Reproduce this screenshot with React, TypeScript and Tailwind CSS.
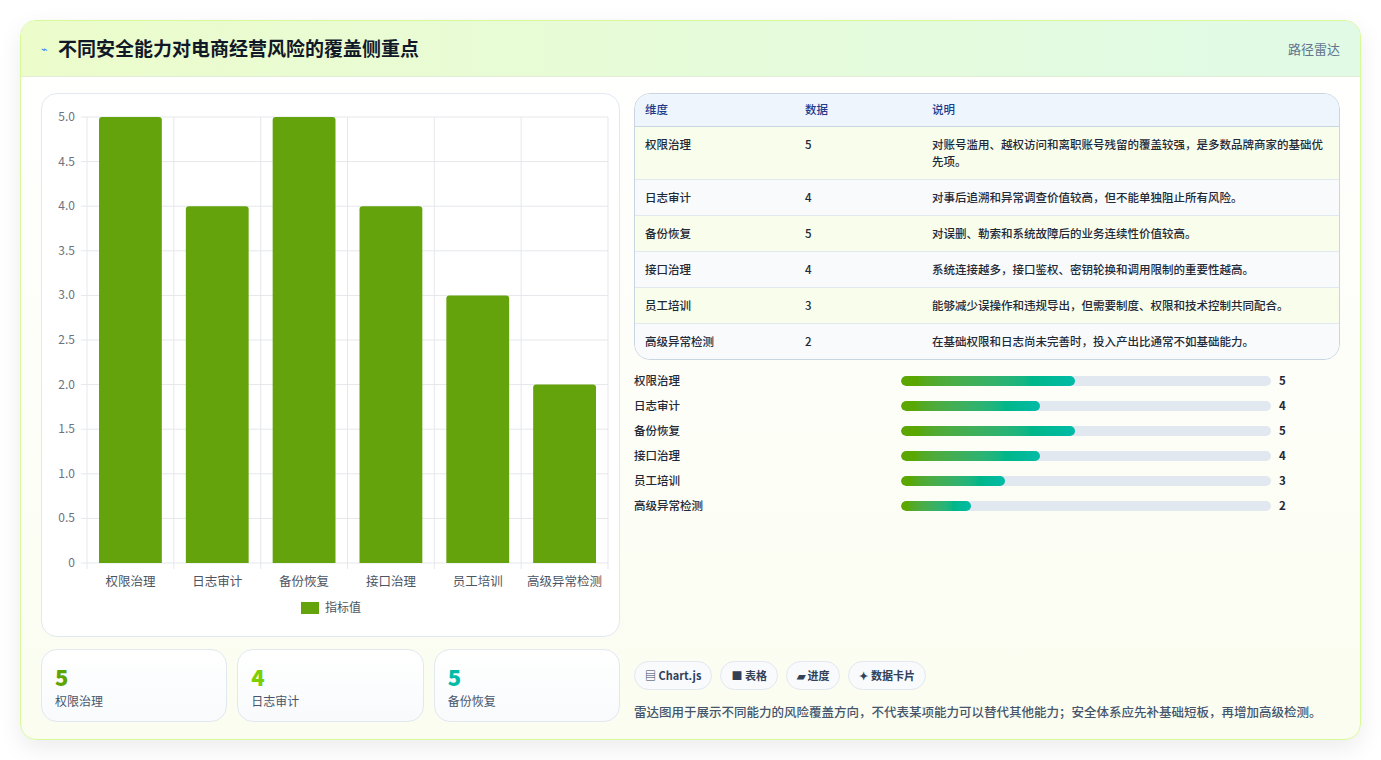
const F = { fontFamily: '"Noto Sans CJK SC", "Noto Sans", sans-serif' };
const cats = ["权限治理", "日志审计", "备份恢复", "接口治理", "员工培训", "高级异常检测"];
const vals = [5, 4, 5, 4, 3, 2];
const rows = [
  ["权限治理", "5", "对账号滥用、越权访问和离职账号残留的覆盖较强，是多数品牌商家的基础优先项。"],
  ["日志审计", "4", "对事后追溯和异常调查价值较高，但不能单独阻止所有风险。"],
  ["备份恢复", "5", "对误删、勒索和系统故障后的业务连续性价值较高。"],
  ["接口治理", "4", "系统连接越多，接口鉴权、密钥轮换和调用限制的重要性越高。"],
  ["员工培训", "3", "能够减少误操作和违规导出，但需要制度、权限和技术控制共同配合。"],
  ["高级异常检测", "2", "在基础权限和日志尚未完善时，投入产出比通常不如基础能力。"],
];

function Chart() {
  const x0 = 45, x1 = 566, top = 23, bot = 469;
  const cw = (x1 - x0) / 6;
  const ticks = [0, 0.5, 1, 1.5, 2, 2.5, 3, 3.5, 4, 4.5, 5];
  const y = (v: number) => bot - (v / 5) * (bot - top);
  return (
    <svg width="579" height="543" className="block">
      {ticks.map((t) => (
        <g key={t}>
          <line x1={x0 - 6} x2={x1} y1={y(t)} y2={y(t)} stroke="#e5e7eb" />
          <text x={x0 - 12} y={y(t) + 4} textAnchor="end" fontSize="12" fill="#6b7280" style={F}>{t === 0 ? "0" : t.toFixed(1)}</text>
        </g>
      ))}
      {Array.from({ length: 7 }).map((_, i) => (
        <line key={i} x1={x0 + i * cw} x2={x0 + i * cw} y1={top} y2={bot + 6} stroke="#e5e7eb" />
      ))}
      {vals.map((v, i) => (
        <g key={i}>
          <path d={`M${x0 + i * cw + 12} ${bot} V${y(v) + 3} Q${x0 + i * cw + 12} ${y(v)} ${x0 + i * cw + 15} ${y(v)} H${x0 + i * cw + cw - 15} Q${x0 + i * cw + cw - 12} ${y(v)} ${x0 + i * cw + cw - 12} ${y(v) + 3} V${bot} Z`} fill="#65a30d" />
          <text x={x0 + i * cw + cw / 2} y={bot + 23} textAnchor="middle" fontSize="12.5" fill="#4b5563" style={F}>{cats[i]}</text>
        </g>
      ))}
      <rect x="259" y="508" width="18" height="12" fill="#65a30d" />
      <text x="283" y="518" fontSize="12" fill="#4b5563" style={F}>指标值</text>
    </svg>
  );
}

export default function App() {
  return (
    <div className="w-[1381px] h-[760px] bg-white p-5" style={F}>
      <div className="h-[720px] rounded-2xl border border-lime-200 bg-gradient-to-b from-white to-[#fbfdf0] shadow-[0_8px_24px_rgba(0,0,0,0.08)] overflow-hidden flex flex-col">
        <div className="h-[56px] flex items-center justify-between px-5 bg-gradient-to-r from-[#ecfccb] to-[#e0fae6] border-b border-[#e2ecd6]">
          <div className="flex items-center gap-2.5">
            <span className="text-[11px] text-blue-500">⌁</span>
            <span className="text-[19px] font-bold text-[#111827]">不同安全能力对电商经营风险的覆盖侧重点</span>
          </div>
          <span className="text-[13px] text-slate-500">路径雷达</span>
        </div>
        <div className="flex gap-[14px] px-5 pt-4">
          <div className="w-[579px] flex flex-col gap-3">
            <div className="h-[544px] rounded-2xl border border-slate-200 bg-white"><Chart /></div>
            <div className="grid grid-cols-3 gap-[10px]">
              {[["5", "权限治理", "text-lime-600"], ["4", "日志审计", "text-lime-500"], ["5", "备份恢复", "text-teal-500"]].map(([v, l, c]) => (
                <div key={l} className="h-[73px] rounded-2xl border border-slate-200 bg-gradient-to-b from-white to-slate-50 px-[13px] pt-3">
                  <div className={`text-[22px] font-extrabold leading-7 ${c}`}>{v}</div>
                  <div className="text-[12px] text-slate-600 mt-0.5">{l}</div>
                </div>
              ))}
            </div>
          </div>
          <div className="flex-1 flex flex-col">
            <div className="rounded-2xl border border-slate-300 overflow-hidden text-[11.5px] text-[#1f2937] font-medium">
              <div className="flex h-[33px] items-center bg-[#eef5fd] border-b border-slate-300 text-[#1e3a8a]">
                <div className="w-[170px] pl-[10px]">维度</div><div className="w-[127px]">数据</div><div className="flex-1">说明</div>
              </div>
              {rows.map((r, i) => (
                <div key={i} className={`flex py-[9px] leading-[17px] ${i % 2 ? "bg-slate-50" : "bg-[#f9fdeb]"} ${i < 5 ? "border-b border-slate-200" : ""}`}>
                  <div className="w-[170px] pl-[10px]">{r[0]}</div><div className="w-[127px]">{r[1]}</div><div className="flex-1 pr-3">{r[2]}</div>
                </div>
              ))}
            </div>
            <div className="flex flex-col gap-[8px] mt-[12px]">
              {rows.map((r, i) => (
                <div key={i} className="flex items-center h-[17px] text-[11.5px] font-medium text-[#1f2937]">
                  <div className="w-[267px]">{r[0]}</div>
                  <div className="w-[370px] h-[10px] rounded-full bg-slate-200 overflow-hidden">
                    <div className="h-full rounded-full bg-gradient-to-r from-lime-600 to-teal-500" style={{ width: `${Number(r[1]) * 9.4}%` }} />
                  </div>
                  <div className="ml-2 font-bold">{r[1]}</div>
                </div>
              ))}
            </div>
            <div className="mt-auto">
              <div className="flex gap-2 mb-[12px]">
                {["▤ Chart.js", "■ 表格", "▰ 进度", "✦ 数据卡片"].map((c) => (
                  <span key={c} className="h-[29px] px-[10px] flex items-center rounded-full border border-slate-200 bg-slate-50 text-[11px] font-semibold text-slate-700">{c}</span>
                ))}
              </div>
              <p className="text-[12.5px] leading-[20px] text-slate-600 font-medium">雷达图用于展示不同能力的风险覆盖方向，不代表某项能力可以替代其他能力；安全体系应先补基础短板，再增加高级检测。</p>
            </div>
          </div>
        </div>
      </div>
    </div>
  );
}
